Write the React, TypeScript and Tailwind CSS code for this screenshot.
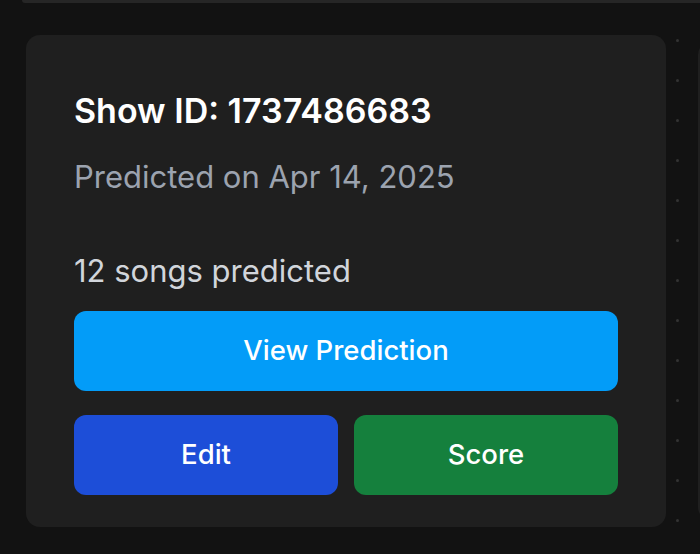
export default function App() {
  const dots = Array.from({ length: 13 });

  return (
    <div
      className="w-[700px] h-[554px] overflow-hidden bg-[#121212] relative"
      style={{ fontFamily: "Inter, 'Noto Sans', sans-serif" }}
    >
      {/* bottom edge of the card above */}
      <div className="ml-[22px] h-[3px] bg-[#262626] rounded-bl-[12px]" />

      <div className="flex items-start mt-[32px]">
        <div className="shrink-0 ml-[26px] w-[640px] rounded-[14px] bg-[#1f1f1f] pl-[48px] pr-[48px] pt-[56px] pb-[32px]">
          <h2 className="text-[34px] leading-[40px] font-semibold text-white">
            Show ID: 1737486683
          </h2>
          <p className="mt-[26px] text-[31px] leading-[40px] text-[#9ca3af]">
            Predicted on Apr 14, 2025
          </p>
          <p className="mt-[54px] text-[31px] leading-[40px] text-[#d1d5db]">
            12 songs predicted
          </p>
          <button className="mt-[20px] w-full h-[80px] rounded-[12px] bg-[#039cf8] text-white text-[27.5px] font-medium">
            View Prediction
          </button>
          <div className="mt-[24px] grid grid-cols-2 gap-[16px]">
            <button className="h-[80px] rounded-[12px] bg-[#1d4ed8] text-white text-[27.5px] font-medium">
              Edit
            </button>
            <button className="h-[80px] rounded-[12px] bg-[#15803d] text-white text-[27.5px] font-medium">
              Score
            </button>
          </div>
        </div>

        {/* dotted divider */}
        <div className="shrink-0 ml-[10px] -mt-[1px] flex flex-col items-center gap-[37px] pt-[5px]">
          {dots.map((_, i) => (
            <div key={i} className="w-[3px] h-[3px] rounded-full bg-[#333333]" />
          ))}
        </div>

        {/* next card, cut off */}
        <div className="shrink-0 ml-[19px] mt-[6px] w-[640px] h-[480px] rounded-[14px] bg-[#1f1f1f]" />
      </div>
    </div>
  );
}
